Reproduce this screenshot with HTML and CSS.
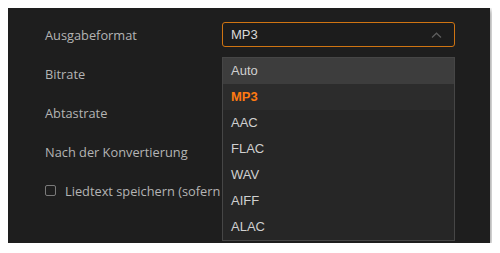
FILE: index.html
```html
<!DOCTYPE html>
<html lang="de">
<head>
    <meta charset="UTF-8">
    <meta name="viewport" content="width=device-width, initial-scale=1.0">
    <title>Ausgabeeinstellungen</title>
    <link rel="stylesheet" href="styles.css">
</head>
<body>
    <div class="settings-panel">
        <div class="setting-row">
            <span class="label">Ausgabeformat</span>
            <div class="select-wrap">
                <div class="select open">
                    <span>MP3</span>
                    <svg class="chevron" width="11" height="6" viewBox="0 0 11 6">
                        <path d="M1 5.5 L5.5 1.2 L10 5.5" fill="none" stroke="#5e5e5e" stroke-width="1.2"/>
                    </svg>
                </div>
                <ul class="dropdown">
                    <li class="hover">Auto</li>
                    <li class="selected">MP3</li>
                    <li>AAC</li>
                    <li>FLAC</li>
                    <li>WAV</li>
                    <li>AIFF</li>
                    <li>ALAC</li>
                </ul>
            </div>
        </div>
        <div class="setting-row">
            <span class="label">Bitrate</span>
        </div>
        <div class="setting-row">
            <span class="label">Abtastrate</span>
        </div>
        <div class="setting-row">
            <span class="label">Nach der Konvertierung</span>
        </div>
        <div class="setting-row">
            <label class="check">
                <span class="box"></span>
                <span class="check-text">Liedtext speichern (sofern</span>
            </label>
        </div>
    </div>
</body>
</html>
```

FILE: styles.css
```css
* {
    margin: 0;
    padding: 0;
    box-sizing: border-box;
}

body {
    margin: 8px;
    background: #ffffff;
    font-family: "Open Sans", sans-serif;
}

.settings-panel {
    width: 482px;
    height: 235px;
    background: #1e1e1e;
    padding: 7px 0 0 37px;
    box-shadow: 1px 2px 5px rgba(0, 0, 0, 0.45);
    overflow: hidden;
}

.setting-row {
    display: flex;
    align-items: center;
    height: 39px;
}

.label {
    width: 177px;
    font-size: 12.8px;
    color: #b4b4b4;
}

.select-wrap {
    position: relative;
    width: 233px;
}

.select {
    height: 25px;
    border: 1px solid #cf7412;
    border-radius: 3px;
    background: #1c1c1c;
    display: flex;
    align-items: center;
    justify-content: space-between;
    padding: 0 12px 0 8px;
    font-family: "Liberation Sans", Arial, sans-serif;
    font-size: 13px;
    color: #d8d8d8;
}

.dropdown {
    position: absolute;
    top: 35px;
    left: 0;
    width: 233px;
    list-style: none;
    background: #262626;
    border: 1px solid #464646;
    font-family: "Liberation Sans", Arial, sans-serif;
    font-size: 13px;
    color: #d0d0d0;
    z-index: 2;
}

.dropdown li {
    height: 26px;
    line-height: 26px;
    padding-left: 8px;
}

.dropdown li.hover {
    background: #3d3d3d;
}

.dropdown li.selected {
    background: #2c2c2c;
    color: #ff7a12;
    font-weight: bold;
}

.check {
    display: flex;
    align-items: center;
    gap: 9px;
    font-size: 12.8px;
    color: #b4b4b4;
}

.check-text {
    white-space: nowrap;
}

.box {
    width: 11px;
    height: 11px;
    border: 1px solid #7a7a7a;
    border-radius: 2px;
}
```
